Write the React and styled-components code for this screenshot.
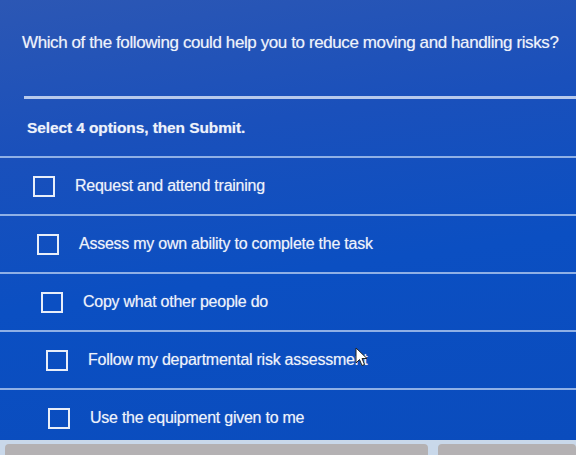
import React from 'react'
import styled, { createGlobalStyle } from 'styled-components'

const GlobalStyle = createGlobalStyle`
  html, body {
    margin: 0;
    padding: 0;
    background: #c9d8ea;
  }
  body {
    font-family: "Liberation Sans", Arial, sans-serif;
  }
`

const Page = styled.div`
  width: 576px;
  height: 455px;
  overflow: hidden;
  display: flex;
  flex-direction: column;
`

const Panel = styled.div`
  height: 440px;
  flex: none;
  overflow: hidden;
  background: linear-gradient(172deg, #2c57b4 0%, #1a50bb 30%, #0b4fc2 60%, #0a4cbd 100%);
  position: relative;
  color: #eef2fa;
  text-shadow: 0 0 1px rgba(255, 255, 255, 0.45);
`

const Question = styled.h1`
  margin: 0;
  height: 96px;
  padding: 0 0 10px 22px;
  display: flex;
  align-items: center;
  box-sizing: border-box;
  font-size: 17px;
  font-weight: normal;
  letter-spacing: -0.4px;
`

const Rule = styled.div`
  height: 3px;
  margin-left: 24px;
  background: #b7c9ec;
`

const Prompt = styled.p`
  margin: 0;
  height: 57px;
  padding: 0 0 0 27px;
  display: flex;
  align-items: center;
  box-sizing: border-box;
  font-size: 15.5px;
  font-weight: bold;
  letter-spacing: -0.1px;
`

const Options = styled.ul`
  list-style: none;
  margin: 0;
  padding: 0;
`

const Option = styled.li`
  height: 58px;
  box-sizing: border-box;
  border-top: 2px solid #8fb0e6;
  display: flex;
  align-items: center;
  gap: 20px;
  padding-left: ${p => p.$indent}px;
  font-size: 16px;
  letter-spacing: -0.25px;
`

const Box = styled.span`
  width: 22px;
  height: 21px;
  box-sizing: border-box;
  border: 2.5px solid #e8eef9;
  flex: none;
`

const Cursor = styled.svg`
  position: absolute;
  left: 355px;
  top: 347px;
`

const Footer = styled.div`
  flex: 1;
  display: flex;
  gap: 10px;
  padding: 4px 0 0 5px;
`

const FooterButton = styled.div`
  width: ${p => p.$width}px;
  background: #b4b1b3;
  border-radius: 4px 4px 0 0;
`

const options = [
  { label: 'Request and attend training', indent: 33 },
  { label: 'Assess my own ability to complete the task', indent: 37 },
  { label: 'Copy what other people do', indent: 41 },
  { label: 'Follow my departmental risk assessment', indent: 46 },
  { label: 'Use the equipment given to me', indent: 48 },
]

export default function App() {
  return (
    <Page>
      <GlobalStyle />
      <Panel>
        <Question>Which of the following could help you to reduce moving and handling risks?</Question>
        <Rule />
        <Prompt>Select 4 options, then Submit.</Prompt>
        <Options>
          {options.map(o => (
            <Option key={o.label} $indent={o.indent}>
              <Box />
              {o.label}
            </Option>
          ))}
        </Options>
        <Cursor width="14" height="20" viewBox="0 0 14 20">
          <path d="M1 1 L1 16 L4.5 12.5 L7 18.5 L9.5 17.5 L7 11.5 L12 11.5 Z" fill="#ffffff" stroke="#222" strokeWidth="1" />
        </Cursor>
      </Panel>
      <Footer>
        <FooterButton $width={430} />
        <FooterButton $width={140} />
      </Footer>
    </Page>
  )
}
